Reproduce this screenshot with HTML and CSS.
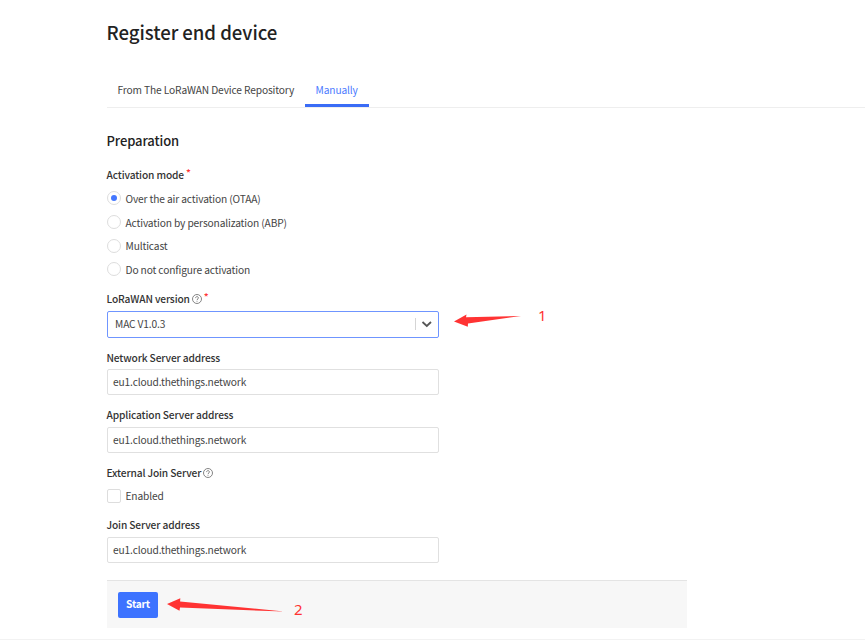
FILE: index.html
```html
<!DOCTYPE html>
<html lang="en">
<head>
<meta charset="utf-8">
<title>Register end device</title>
<link rel="stylesheet" href="styles.css">
</head>
<body>
<main class="page">
  <h1 class="title"><span>Register end device</span></h1>
  <nav class="tabs">
    <a class="tab"><span>From The LoRaWAN Device Repository</span></a>
    <a class="tab active"><span>Manually</span></a>
  </nav>
  <form class="form">
    <h2 class="subtitle"><span>Preparation</span></h2>
    <div class="label"><span>Activation mode</span><i class="req">*</i></div>
    <div class="radios">
      <label class="option"><b class="radio checked"></b><span>Over the air activation (OTAA)</span></label>
      <label class="option"><b class="radio"></b><span>Activation by personalization (ABP)</span></label>
      <label class="option"><b class="radio"></b><span>Multicast</span></label>
      <label class="option"><b class="radio"></b><span>Do not configure activation</span></label>
    </div>
    <div class="label version"><span>LoRaWAN version</span><svg class="help" viewBox="0 0 10 10"><circle cx="5" cy="5" r="4.5"/><path d="M3.6 4.1C3.6 2.1 6.4 2.1 6.4 4C6.4 5 5 5 5 6.1M5 6.9V7.7"/></svg><i class="req">*</i></div>
    <div class="select">
      <span>MAC V1.0.3</span>
      <svg class="chevron" viewBox="0 0 24 24"><path d="M1.5 6V18"/><path class="tip" d="M8.5 10L12.8 14L17 10"/></svg>
      <div class="note one">
        <svg width="68" height="16" viewBox="0 0 68 16"><path d="M0 7.5L12.5 0.5L12 3.2L67 2L14 9.5L13.8 12.8Z"/></svg><span>1</span>
      </div>
    </div>
    <div class="label network"><span>Network Server address</span></div>
    <div class="input first"><span>eu1.cloud.thethings.network</span></div>
    <div class="label app"><span>Application Server address</span></div>
    <div class="input"><span>eu1.cloud.thethings.network</span></div>
    <div class="label external"><span>External Join Server</span><svg class="help" viewBox="0 0 10 10"><circle cx="5" cy="5" r="4.5"/><path d="M3.6 4.1C3.6 2.1 6.4 2.1 6.4 4C6.4 5 5 5 5 6.1M5 6.9V7.7"/></svg></div>
    <label class="option enabled"><b class="checkbox"></b><span>Enabled</span></label>
    <div class="label join"><span>Join Server address</span></div>
    <div class="input"><span>eu1.cloud.thethings.network</span></div>
    <div class="actions">
      <button class="start" type="button"><span>Start</span></button>
      <div class="note two">
        <svg width="119" height="16" viewBox="0 0 119 16"><path d="M0 6L13.3 0.3L13.1 3.4L117 13.5L13 9.6L12.5 12.7Z"/></svg><span>2</span>
      </div>
    </div>
  </form>
</main>
<footer class="footer"></footer>
</body>
</html>
```
FILE: styles.css
```css
* { box-sizing: border-box; }
body {
  margin: 0;
  height: 641px;
  overflow: hidden;
  background: #fff;
  color: #444;
  font: 400 10.2px/16px "Noto Sans CJK SC", sans-serif;
  letter-spacing: -.13px;
  white-space: nowrap;
}
.page { height: 639px; padding: 17px 0 0 107px; }
.title { margin: 0 0 0 -.5px; color: #222; font-size: 18.6px; font-weight: 500; line-height: 30px; letter-spacing: -.05px; }
.tabs { display: flex; height: 34px; margin-top: 27px; border-bottom: 1px solid #eee; }
.tab { height: 33px; padding: 8px 10.6px 0; }
.tab:first-child { width: 198px; }
.tab.active { width: 64px; color: #4c7bff; border-bottom: 3px solid #3a6cf6; }
.subtitle { margin: 23px 0 0 -.5px; color: #222; font-size: 13px; font-weight: 500; line-height: 20px; letter-spacing: -.1px; }
.form { width: 580px; }
.label { display: flex; height: 16px; color: #333; font-weight: 500; margin: 16px 0 0 -.5px; }
.req { color: #f33; font-style: normal; margin: -2px 0 0 2px; }
.radios { display: grid; grid-auto-rows: 23.7px; margin-top: 4px; }
.option { display: flex; align-items: center; gap: 4.5px; }
.radio, .checkbox { width: 14px; height: 14px; border: 1px solid #ddd; background: #fff; }
.radio { display: grid; place-items: center; border-radius: 50%; margin-top: -1px; }
.radio.checked::after { content: ""; width: 6px; height: 6px; border-radius: 50%; background: #4477ff; }
.checkbox { border-radius: 2px; }
.label.version { margin-top: 9.2px; }
.help { width: 10px; height: 10px; margin: 3px 0 0 2px; fill: none; stroke: #777; stroke-width: .9; }
.select, .input { display: flex; align-items: center; width: 332px; height: 26px; border: 1px solid #e0e0e0; border-radius: 2px; }
.select { position: relative; height: 27px; margin-top: 4px; padding-left: 7px; border-color: #6f95ff; justify-content: space-between; }
.chevron { width: 24px; height: 24px; fill: none; stroke: #d5d5d5; }
.chevron .tip { stroke: #555; stroke-width: 1.8; }
.input { margin-top: 4px; padding-left: 5px; }
.input.first { margin-top: 3px; }
.label.network { margin-top: 12px; }
.label.app { margin-top: 12px; }
.label.external { margin-top: 12px; }
.enabled { height: 16px; margin-top: 7px; }
.label.join { margin-top: 13px; }
.actions { position: relative; height: 48px; margin-top: 17px; padding: 11px; border-top: 1px solid #e4e4e4; background: #f7f7f7; }
.start { display: block; width: 40px; height: 26px; padding: 0 0 2px; border: 0; border-radius: 2px; background: #3d73ff; color: #fff; font: 700 10.2px/24px "Noto Sans CJK SC", sans-serif; letter-spacing: -.2px; }
.note { position: absolute; color: #f33; font: 15px/18px "Noto Sans", sans-serif; letter-spacing: 0; }
.note svg { display: block; fill: #f33; }
.note span { position: absolute; }
.one { left: 346px; top: 2px; }
.one span { left: 84px; top: -8px; }
.two { left: 60px; top: 17px; }
.two span { left: 127px; top: 2px; }
.footer { height: 2px; border-top: 1px solid #f2f2f2; }
```
